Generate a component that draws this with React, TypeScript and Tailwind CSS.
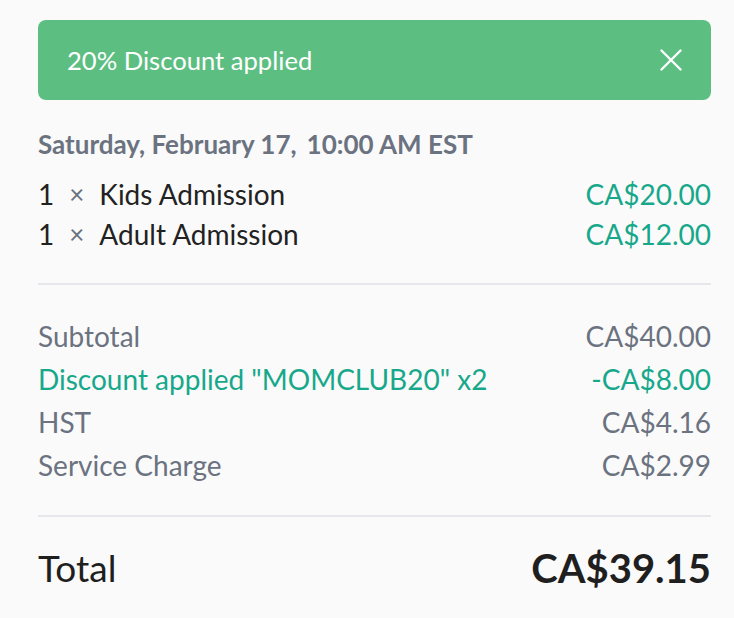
import React from "react";

export default function App() {
  const font = { fontFamily: "Lato, 'Noto Sans', sans-serif" };
  return (
    <div className="w-[734px] h-[618px] bg-[#fafafa] pl-[38px] pr-[23px] pt-[20px] overflow-hidden" style={font}>
      <div className="h-[80px] rounded-[8px] bg-[#5dbe82] flex items-center justify-between pl-[29px] pr-[29px]">
        <span className="text-white text-[25.6px] font-normal">20% Discount applied</span>
        <svg width="22" height="22" viewBox="0 0 22 22" fill="none" stroke="white" strokeWidth="2.4" strokeLinecap="round">
          <path d="M1.5 1.5 L20.5 20.5 M20.5 1.5 L1.5 20.5" />
        </svg>
      </div>
      <div className="mt-[29px] flex text-[26px] font-bold text-[#6b7280] leading-[30px]">
        <span>Saturday, February 17,</span>
        <span className="ml-[10px]">10:00 AM EST</span>
      </div>
      <div className="mt-[15px] flex flex-col text-[28px] leading-[40px]">
        {[
          ["Kids Admission", "CA$20.00"],
          ["Adult Admission", "CA$12.00"],
        ].map(([n, p]) => (
          <div key={n} className="flex justify-between">
            <div className="flex items-center text-[#222]">
              <span>1</span>
              <span className="text-[#6b7280] text-[26px] ml-[15px] mr-[15px]">×</span>
              <span>{n}</span>
            </div>
            <span className="text-[#17a88b]">{p}</span>
          </div>
        ))}
      </div>
      <div className="mt-[29px] h-[2px] bg-[#e5e7eb]" />
      <div className="mt-[30px] flex flex-col text-[28px] leading-[43px] text-[#6b7280]">
        <div className="flex justify-between"><span>Subtotal</span><span>CA$40.00</span></div>
        <div className="flex justify-between text-[#17a88b]"><span>Discount applied "MOMCLUB20" x2</span><span>-CA$8.00</span></div>
        <div className="flex justify-between"><span>HST</span><span>CA$4.16</span></div>
        <div className="flex justify-between"><span>Service Charge</span><span>CA$2.99</span></div>
      </div>
      <div className="mt-[28px] h-[2px] bg-[#e5e7eb]" />
      <div className="mt-[21px] flex justify-between items-center text-[#1f1f1f]">
        <span className="text-[37px]">Total</span>
        <span className="text-[40px] font-bold">CA$39.15</span>
      </div>
    </div>
  );
}
